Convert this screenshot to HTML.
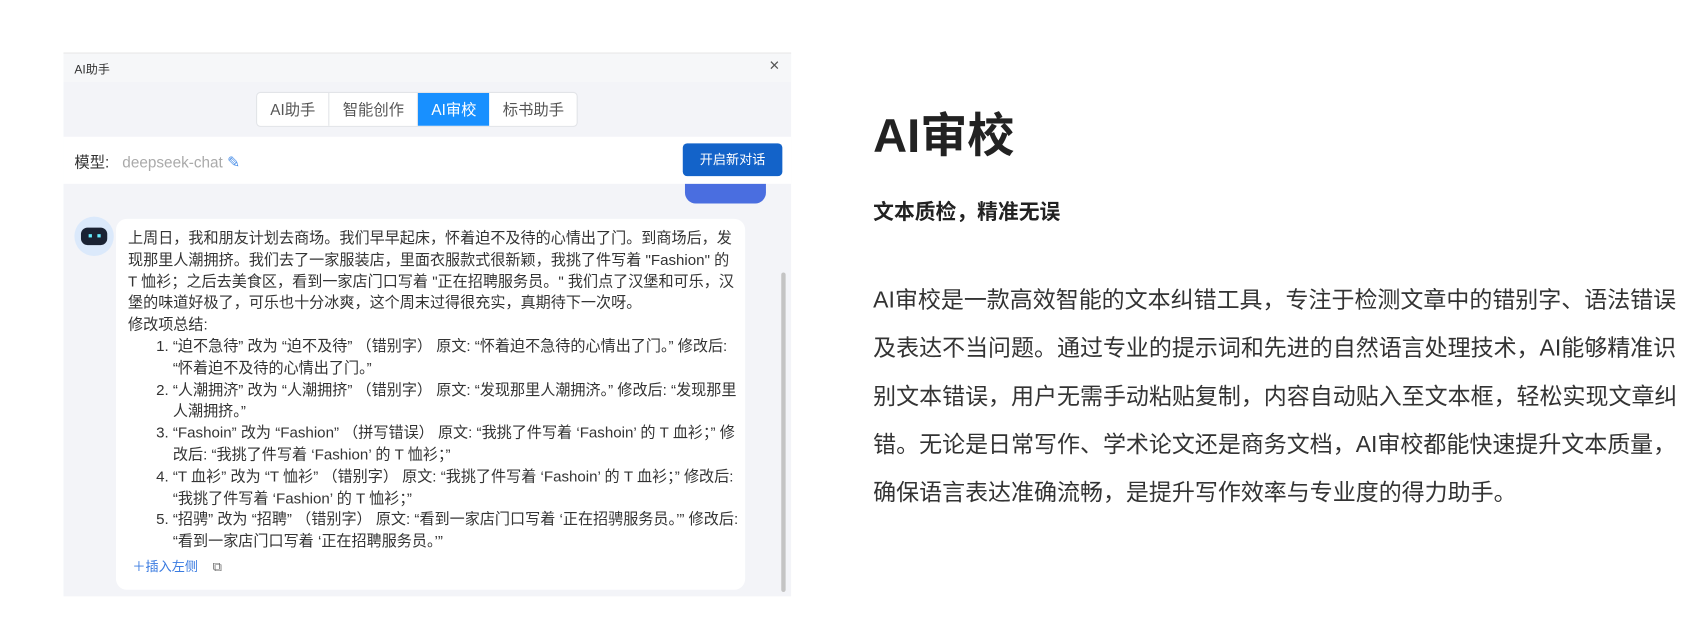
<!DOCTYPE html>
<html><head><meta charset="utf-8"><style>
*{margin:0;padding:0;box-sizing:border-box}
body{width:1707px;height:639px;background:#fff;font-family:"Liberation Sans","Noto Sans CJK SC",sans-serif;position:relative;overflow:hidden;color:#333}
#wrap{position:absolute;left:0;top:0;width:1560px;height:584px;transform:scale(1.0942);transform-origin:0 0}
.abs{position:absolute}
.panel{left:58px;top:48px;width:665px;height:497px;background:#f3f4f8;border-top:1px solid #e6e6e6}
.title{left:0;top:0;width:665px;height:26px;background:#f6f7f9;font-size:11px;color:#333;padding:6px 10px}
.tabs{left:176px;top:35px;height:32px;display:flex;border:1px solid #e2e4e8;border-radius:4px;background:#fff;overflow:hidden}
.tabs div{font-size:14px;color:#555;padding:0 12px;line-height:30px;border-right:1px solid #e2e4e8}
.tabs .on{background:#1890ff;color:#fff;border:none}
.model{left:0;top:76px;width:665px;height:43px;background:#fff}
.bubble{left:48px;top:151px;width:575px;height:339px;background:#fff;border-radius:10px}
.txt{font-size:13.8px;line-height:19.8px;color:#333;padding:8px 6px 8px 11px}
ol{padding-left:41px}
h1{left:798px;top:90px;font-size:43px;font-weight:bold;color:#222}
h2{left:798px;top:179px;font-size:19px;font-weight:bold;color:#222}
.para{left:798px;top:253px;width:748px;font-size:21px;line-height:44px;color:#333}
</style></head><body><div id="wrap">
<div class="abs panel">
 <div class="abs title">AI助手</div>
 <div class="abs" style="left:645px;top:3px;font-size:16px;color:#555">×</div>
 <div class="abs tabs"><div>AI助手</div><div>智能创作</div><div class="on">AI审校</div><div style="border:none">标书助手</div></div>
 <div class="abs model">
  <div class="abs" style="left:10px;top:13px;font-size:14px;color:#333">模型: <span style="color:#aaa;margin-left:8px">deepseek-chat</span> <span style="color:#4a8fe8">✎</span></div>
  <div class="abs" style="left:566px;top:6px;width:91px;height:30px;background:#1363c9;border-radius:4px;color:#fff;font-size:12px;line-height:30px;text-align:center">开启新对话</div>
 </div>
 <div class="abs" style="left:568px;top:119px;width:74px;height:18px;background:#4a6ee0;border-radius:0 0 10px 10px"></div>
 <div class="abs" style="left:10px;top:149px;width:36px;height:36px;border-radius:50%;background:#dbe9fb"></div>
 <div class="abs" style="left:16px;top:159px;width:24px;height:16px;border-radius:6px;background:#1a2233"></div>
 <div class="abs" style="left:23px;top:165px;width:3px;height:3px;background:#6ef;"></div>
 <div class="abs" style="left:31px;top:165px;width:3px;height:3px;background:#6ef;"></div>
 <div class="abs" style="left:656px;top:200px;width:4px;height:292px;background:#c4c4c4;border-radius:2px"></div>
 <div class="abs bubble"><div class="txt">
 上周日，我和朋友计划去商场。我们早早起床，怀着迫不及待的心情出了门。到商场后，发现那里人潮拥挤。我们去了一家服装店，里面衣服款式很新颖，我挑了件写着 "Fashion" 的 T 恤衫；之后去美食区，看到一家店门口写着 "正在招聘服务员。" 我们点了汉堡和可乐，汉堡的味道好极了，可乐也十分冰爽，这个周末过得很充实，真期待下一次呀。<br>修改项总结:
 <ol>
 <li>“迫不急待” 改为 “迫不及待” （错别字） 原文: “怀着迫不急待的心情出了门。” 修改后: “怀着迫不及待的心情出了门。”</li>
 <li>“人潮拥济” 改为 “人潮拥挤” （错别字） 原文: “发现那里人潮拥济。” 修改后: “发现那里人潮拥挤。”</li>
 <li>“Fashoin” 改为 “Fashion” （拼写错误） 原文: “我挑了件写着 ‘Fashoin’ 的 T 血衫；” 修改后: “我挑了件写着 ‘Fashion’ 的 T 恤衫；”</li>
 <li>“T 血衫” 改为 “T 恤衫” （错别字） 原文: “我挑了件写着 ‘Fashoin’ 的 T 血衫；” 修改后: “我挑了件写着 ‘Fashion’ 的 T 恤衫；”</li>
 <li>“招骋” 改为 “招聘” （错别字） 原文: “看到一家店门口写着 ‘正在招骋服务员。’” 修改后: “看到一家店门口写着 ‘正在招聘服务员。’”</li>
 </ol>
 <div style="font-size:12px;color:#3a7be0;margin-top:4px;padding-left:4px">＋插入左侧 <span style="color:#666;margin-left:10px">⧉</span></div>
 </div></div>
</div>
<h1 class="abs">AI审校</h1>
<h2 class="abs">文本质检，精准无误</h2>
<div class="abs para">AI审校是一款高效智能的文本纠错工具，专注于检测文章中的错别字、语法错误及表达不当问题。通过专业的提示词和先进的自然语言处理技术，AI能够精准识别文本错误，用户无需手动粘贴复制，内容自动贴入至文本框，轻松实现文章纠错。无论是日常写作、学术论文还是商务文档，AI审校都能快速提升文本质量，确保语言表达准确流畅，是提升写作效率与专业度的得力助手。</div>
</div></body></html>
